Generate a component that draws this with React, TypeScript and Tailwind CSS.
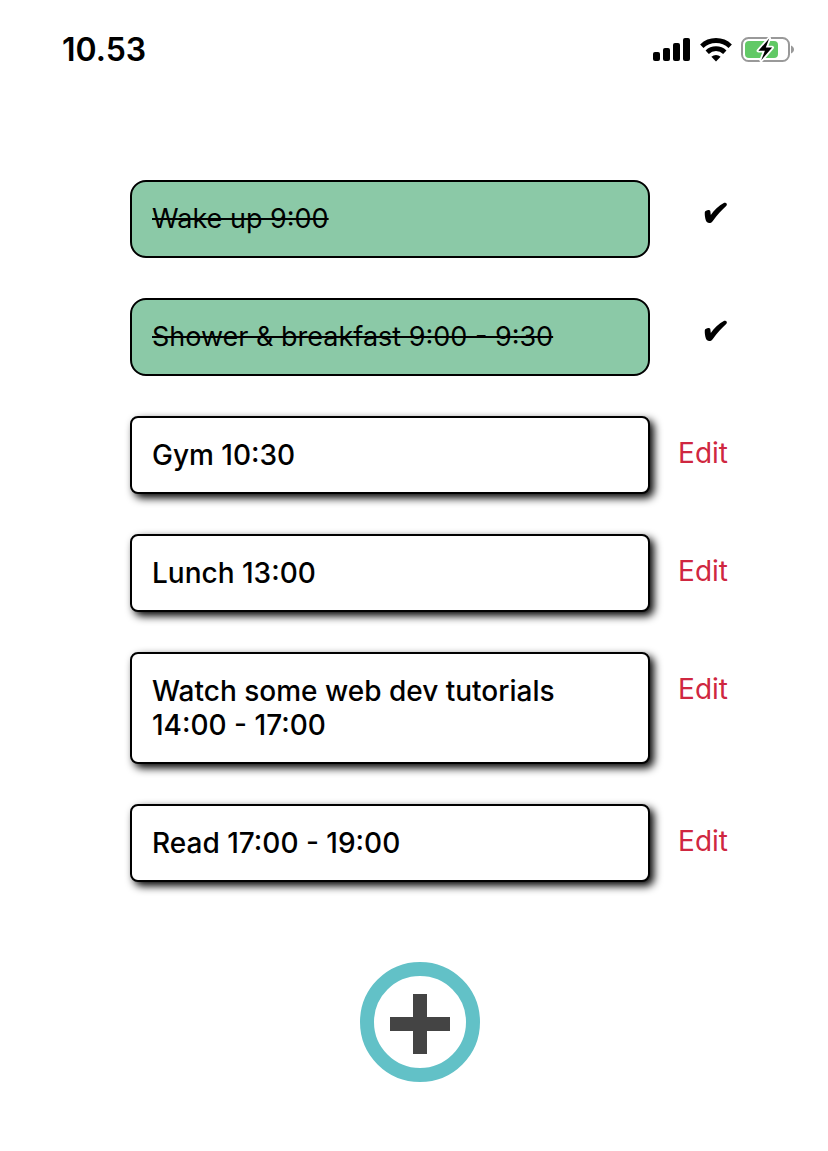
type Task = { text: string; done: boolean };

const tasks: Task[] = [
  { text: "Wake up 9:00", done: true },
  { text: "Shower & breakfast 9:00 - 9:30", done: true },
  { text: "Gym 10:30", done: false },
  { text: "Lunch 13:00", done: false },
  { text: "Watch some web dev tutorials 14:00 - 17:00", done: false },
  { text: "Read 17:00 - 19:00", done: false },
];

function SignalIcon() {
  return (
    <svg width="38" height="24" viewBox="0 0 38 24" aria-label="Signal" role="img">
      <rect x="0" y="14" width="7" height="9" rx="2" />
      <rect x="10" y="10" width="7" height="13" rx="2" />
      <rect x="20" y="5" width="7" height="18" rx="2" />
      <rect x="30" y="0" width="7" height="23" rx="2" />
    </svg>
  );
}

function WifiIcon() {
  return (
    <svg width="32" height="24" viewBox="0 0 32 24" aria-label="Wi-Fi" role="img">
      <g fill="none" stroke="#000" strokeWidth="4.8">
        <path d="M1.800 8.200a20.500 20.500 0 0 1 28.400 0" />
        <path d="M7.200 14.200a12.700 12.700 0 0 1 17.600 0" />
      </g>
      <path d="M11.400 18.800a7 7 0 0 1 9.200 0L16 23.400z" />
    </svg>
  );
}

function BatteryIcon() {
  return (
    <svg width="54" height="28" viewBox="0 0 54 28" aria-label="Battery charging" role="img">
      <rect x="1" y="2" width="47" height="23" rx="6.500" fill="#fff" stroke="#999" strokeWidth="2" />
      <path d="M50 9.500c4 1.500 4 6.500 0 8z" fill="#999" />
      <rect x="4" y="5" width="33" height="17" rx="4" fill="#62c966" />
      <path
        d="M28.200 2.500 17.400 14.700h6.500L20.200 24.200 31.200 11.600h-6.400z"
        fill="#000"
        stroke="#fff"
        strokeWidth="3.600"
        strokeLinejoin="round"
        paintOrder="stroke"
      />
    </svg>
  );
}

function CheckIcon() {
  return (
    <svg width="24" height="22" viewBox="0 0 24 22" role="img" aria-label="Done">
      <path d="M.8 10.200C1.200 8 5.600 7 6.300 9L6.800 12.900C10 8.200 14.500 3.700 20.200 .8C22.200 .1 23.700 2 22.400 3.800C17.600 8.200 13 13 9.200 18.500C7.500 21.800 2.900 22 1.900 18.600C1 15.700 .6 12.800 .8 10.200Z" />
    </svg>
  );
}

function TaskRow({ text, done }: Task) {
  return (
    <li className="flex items-start gap-7">
      <div
        className={
          done
            ? "min-w-0 flex-1 rounded-2xl border-2 border-black bg-[#8bc9a7] p-5 text-[27px] line-through decoration-2"
            : "min-w-0 flex-1 rounded-lg border-2 border-black bg-white p-5 font-medium shadow-[4px_4px_8px_#000]"
        }
      >
        {text}
      </div>
      <div className="flex w-[50px] shrink-0 justify-end">
        {done ? (
          <span className="pt-[22px]">
            <CheckIcon />
          </span>
        ) : (
          <button type="button" className="cursor-pointer pt-5 text-[#cf2740]">
            Edit
          </button>
        )}
      </div>
    </li>
  );
}

export default function App() {
  return (
    <div className="min-h-screen bg-white font-['Inter',sans-serif] text-black">
      <header className="flex items-center justify-between pt-[30px] pr-[33px] pl-[62px]">
        <time className="text-[32px] leading-10 font-semibold">10.53</time>
        <div className="flex items-center gap-[9px]">
          <SignalIcon />
          <WifiIcon />
          <BatteryIcon />
        </div>
      </header>
      <main className="pt-[110px] pb-[70px]">
        <ul className="flex flex-col gap-10 pr-[100px] pl-[130px] text-[28px] leading-[34px]">
          {tasks.map((task) => (
            <TaskRow key={task.text} {...task} />
          ))}
        </ul>
        <div className="flex justify-center pt-20 pl-3">
          <button
            type="button"
            aria-label="Add task"
            className="flex size-[120px] cursor-pointer items-center justify-center rounded-full border-[14px] border-[#62c1c7] bg-white pt-1"
          >
            <svg width="60" height="60" viewBox="0 0 60 60" fill="#444" aria-hidden="true">
              <path d="M23 0h14v23h23v14H37v23H23V37H0V23h23z" />
            </svg>
          </button>
        </div>
      </main>
    </div>
  );
}
